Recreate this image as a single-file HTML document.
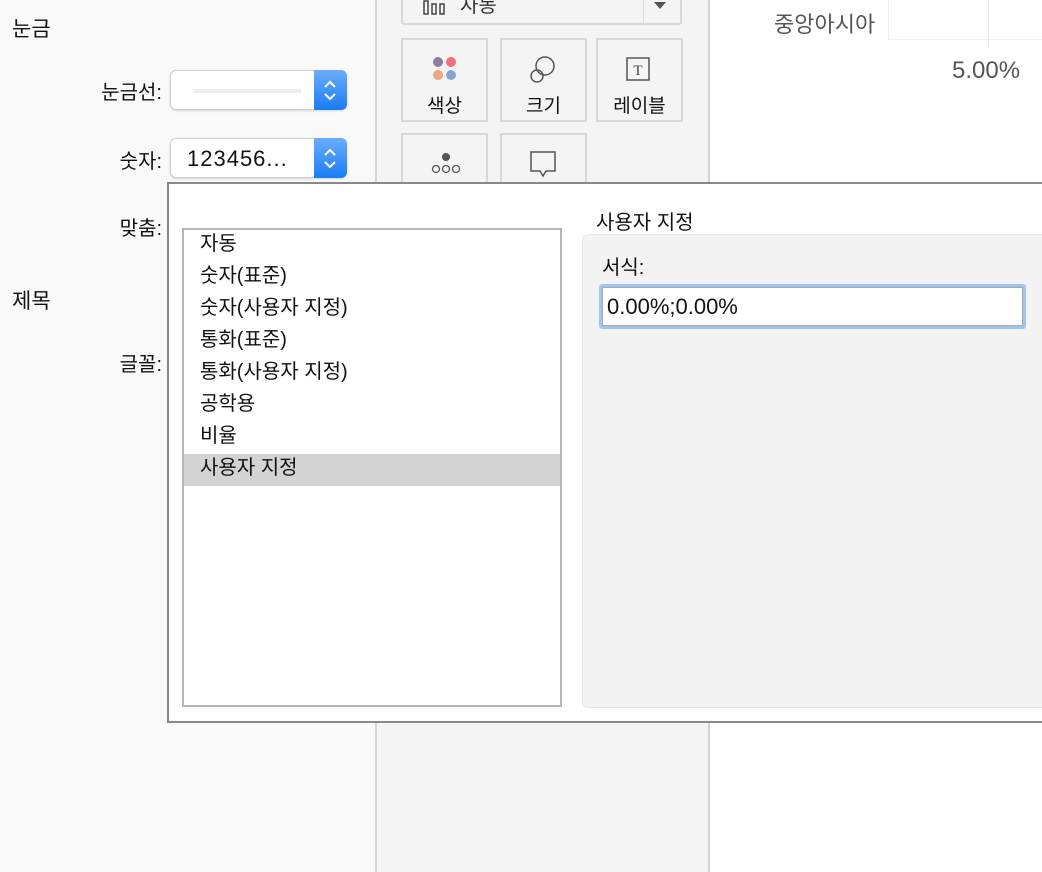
<!DOCTYPE html>
<html><head><meta charset="utf-8"><style>
*{margin:0;padding:0;box-sizing:border-box}
body{width:1042px;height:872px;overflow:hidden;position:relative;background:#fff;font-family:"Liberation Sans","Noto Sans CJK KR",sans-serif;color:#111}
.abs{position:absolute}
.t{position:absolute;font-size:20px;white-space:nowrap}
.r{position:absolute;right:880px;font-size:20px;white-space:nowrap}
.spin{position:absolute;left:170px;width:177px;height:40px;background:#fff;border:1px solid #d0d0d0;border-radius:6px;box-shadow:0 1px 2px rgba(0,0,0,.15)}
.spin .b{position:absolute;right:-1px;top:-1px;width:33px;height:40px;background:linear-gradient(#6aaefc,#1a7cf5);border-radius:0 6px 6px 0}
.card{position:absolute;width:87px;height:84px;border:2px solid #d8d8d8;background:#f4f4f4}
.card span{position:absolute;left:0;right:0;top:51px;text-align:center;font-size:19px}
.li{position:absolute;left:0;right:0;height:32px;padding-left:16px;font-size:20px;line-height:28px}
</style></head><body>
<div class="abs" style="left:0;top:0;width:375px;height:872px;background:#f9f9f9"></div>
<div class="abs" style="left:375px;top:0;width:2px;height:872px;background:#d4d4d4"></div>
<div class="abs" style="left:377px;top:0;width:331px;height:872px;background:#f4f4f4"></div>
<div class="abs" style="left:708px;top:0;width:2px;height:872px;background:#d4d4d4"></div>

<div class="t" style="left:12px;top:13px;font-size:21px">눈금</div>
<div class="t" style="left:12px;top:285px;font-size:21px">제목</div>
<div class="r" style="top:76px">눈금선:</div>
<div class="r" style="top:145px">숫자:</div>
<div class="r" style="top:212px">맞춤:</div>
<div class="r" style="top:348px">글꼴:</div>
<div class="spin" style="top:70px"><div class="abs" style="left:22px;top:18px;width:108px;height:4px;background:#eee"></div><div class="b"><svg width="33" height="40"><path d="M11 17l5-5 5 5M11 24l5 5 5-5" stroke="#fff" stroke-width="2" fill="none"/></svg></div></div>
<div class="spin" style="top:138px"><div class="abs" style="left:16px;top:7px;font-size:22px;letter-spacing:1px">123456...</div><div class="b"><svg width="33" height="40"><path d="M11 17l5-5 5 5M11 24l5 5 5-5" stroke="#fff" stroke-width="2" fill="none"/></svg></div></div>

<div class="abs" style="left:401px;top:-10px;width:281px;height:35px;border:2px solid #d8d8d8;background:#f4f4f4;border-radius:3px"></div>
<div class="abs" style="left:643px;top:-8px;width:1px;height:31px;background:#d8d8d8"></div>
<svg class="abs" style="left:650px;top:0" width="20" height="12"><path d="M4 2h12l-6 7z" fill="#555"/></svg>
<svg class="abs" style="left:422px;top:0" width="30" height="16"><g stroke="#444" stroke-width="1.5" fill="none"><rect x="2" y="1" width="4" height="13"/><rect x="10" y="4" width="4" height="10"/><rect x="18" y="4" width="4" height="10"/></g></svg>
<div class="t" style="left:460px;top:-11px;color:#333">자동</div>

<div class="card" style="left:401px;top:38px"><svg class="abs" style="left:27px;top:14px" width="30" height="30"><circle cx="8" cy="8" r="5" fill="#8f7ba1"/><circle cx="21" cy="8" r="5" fill="#f07080"/><circle cx="8" cy="21" r="5" fill="#f0a57c"/><circle cx="21" cy="21" r="5" fill="#84a6cc"/></svg><span>색상</span></div>
<div class="card" style="left:500px;top:38px"><svg class="abs" style="left:25px;top:14px" width="34" height="32"><g stroke="#555" stroke-width="1.5" fill="none"><circle cx="18" cy="12" r="9"/><circle cx="10" cy="22" r="6"/></g></svg><span>크기</span></div>
<div class="card" style="left:596px;top:38px"><svg class="abs" style="left:27px;top:16px" width="30" height="28"><rect x="2" y="2" width="22" height="22" stroke="#555" stroke-width="1.5" fill="none"/><text x="13" y="19" text-anchor="middle" font-family="Liberation Serif" font-size="15" fill="#444">T</text></svg><span>레이블</span></div>
<div class="card" style="left:401px;top:133px;height:60px"><svg class="abs" style="left:25px;top:16px" width="36" height="26"><circle cx="18" cy="6" r="4" fill="#555"/><g stroke="#555" stroke-width="1.3" fill="none"><circle cx="8" cy="18" r="3.5"/><circle cx="18" cy="18" r="3.5"/><circle cx="28" cy="18" r="3.5"/></g></svg></div>
<div class="card" style="left:500px;top:133px;height:60px"><svg class="abs" style="left:25px;top:14px" width="34" height="30"><path d="M4 3h24v19H19l-3 5-3-5H4z" stroke="#555" stroke-width="1.5" fill="none"/></svg></div>

<div class="t" style="left:774px;top:7px;color:#555;font-size:22px">중앙아시아</div>
<div class="abs" style="left:888px;top:0;width:1px;height:40px;background:#eee"></div>
<div class="abs" style="left:988px;top:0;width:1px;height:48px;background:#eee"></div>
<div class="abs" style="left:888px;top:39px;width:154px;height:1px;background:#eee"></div>
<div class="t" style="left:952px;top:57px;color:#555;font-size:24px">5.00%</div>

<div class="abs" style="left:167px;top:182px;width:890px;height:541px;border:2px solid #888;background:#fff"></div>
<div class="abs" style="left:182px;top:228px;width:380px;height:479px;border:2px solid #b4b4b4;background:#fff">
<div class="li" style="top:0">자동</div>
<div class="li" style="top:32px">숫자(표준)</div>
<div class="li" style="top:64px">숫자(사용자 지정)</div>
<div class="li" style="top:96px">통화(표준)</div>
<div class="li" style="top:128px">통화(사용자 지정)</div>
<div class="li" style="top:160px">공학용</div>
<div class="li" style="top:192px">비율</div>
<div class="li" style="top:224px;background:#d3d3d3">사용자 지정</div>
</div>
<div class="t" style="left:596px;top:206px">사용자 지정</div>
<div class="abs" style="left:582px;top:234px;width:480px;height:474px;background:#f3f3f3;border:1px solid #e8e8e8;border-radius:6px"></div>
<div class="t" style="left:602px;top:251px">서식:</div>
<div class="abs" style="left:599px;top:284px;width:427px;height:45px;border:3px solid #9dc6f5;border-radius:3px;background:#fff"><div class="abs" style="left:0;top:0;right:0;bottom:0;border:1px solid #aaa"></div><div class="abs" style="left:5px;top:7px;font-size:22px">0.00%;0.00%</div></div>
</body></html>
